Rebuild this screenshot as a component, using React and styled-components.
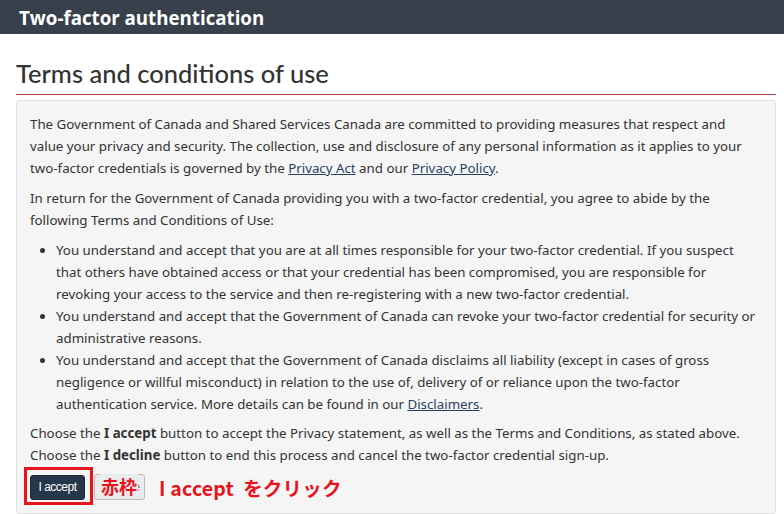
import React from "react";
import styled, { createGlobalStyle } from "styled-components";

const Global = createGlobalStyle`
  html, body { margin: 0; padding: 0; background: #fff; }
  body { font-family: "Noto Sans", sans-serif; color: #333; }
`;

const TopBar = styled.header`
  height: 34px;
  background: #38404c;
  display: flex;
  align-items: center;
  padding-left: 19px;
`;

const AppTitle = styled.div`
  font-family: "Open Sans", sans-serif;
  font-weight: 700;
  font-size: 18.7px;
  color: #fff;
  margin-top: 1px;
`;

const Main = styled.main`
  padding: 0 8px 0 16px;
`;

const Heading = styled.h1`
  font-family: Lato, sans-serif;
  font-weight: 500;
  font-size: 25.5px;
  line-height: 30px;
  color: #333;
  margin: 24px 0 0;
  padding-bottom: 6px;
  border-bottom: 1px solid #af3c43;
`;

const Panel = styled.section`
  margin-top: 5px;
  background: #f5f5f5;
  border: 1px solid #e0e0e0;
  border-radius: 3px;
  padding: 12px 13px 13px 13px;
  font-size: 13.3px;
  line-height: 22px;
`;

const Para = styled.p`
  margin: 0 0 8px;
`;

const Link = styled.a`
  color: #284162;
  text-decoration: underline;
`;

const List = styled.ul`
  margin: 0 0 7px;
  padding-left: 26px;
  li { margin: 0; }
`;

const ButtonRow = styled.div`
  display: flex;
  align-items: center;
  gap: 9px;
`;

const ButtonGroup = styled.div`
  position: relative;
  display: flex;
  align-items: center;
  gap: 9px;
`;

const Btn = styled.button`
  font-family: "Liberation Sans", Arial, sans-serif;
  font-size: 12px;
  letter-spacing: -0.5px;
  height: 25px;
  border-radius: 3px;
  padding: 0 4px;
  cursor: pointer;
  ${(p) =>
    p.$primary
      ? `background: #26374a; color: #fff; border: 1px solid #1c2838; width: 55px;`
      : `background: #eaebed; color: #888; border: 1px solid #bbb; width: 51px; height: 26px;`}
`;

const RedFrame = styled.div`
  position: absolute;
  box-sizing: border-box;
  left: -6px;
  top: -7px;
  width: 69px;
  height: 38px;
  border: 3.5px solid #e8141d;
  pointer-events: none;
`;

const FrameLabel = styled.span`
  position: absolute;
  left: 70px;
  top: 0px;
  font-family: "Noto Sans CJK JP", sans-serif;
  font-weight: 700;
  font-size: 18px;
  line-height: 25px;
  color: #e8141d;
  background: #eaebed;
  padding: 0 1px;
`;

const Note = styled.span`
  margin-left: 5px;
  font-family: "Noto Sans CJK JP", sans-serif;
  font-weight: 700;
  font-size: 19.5px;
  line-height: 25px;
  color: #e8141d;
  letter-spacing: 0.2px;
`;

export default function App() {
  return (
    <>
      <Global />
      <TopBar>
        <AppTitle>Two-factor authentication</AppTitle>
      </TopBar>
      <Main>
        <Heading>Terms and conditions of use</Heading>
        <Panel>
          <Para>
            The Government of Canada and Shared Services Canada are committed to providing measures that respect and
            value your privacy and security. The collection, use and disclosure of any personal information as it applies to your
            two-factor credentials is governed by the <Link href="#">Privacy Act</Link> and our{" "}
            <Link href="#">Privacy Policy</Link>.
          </Para>
          <Para>
            In return for the Government of Canada providing you with a two-factor credential, you agree to abide by the
            following Terms and Conditions of Use:
          </Para>
          <List>
            <li>
              You understand and accept that you are at all times responsible for your two-factor credential. If you suspect
              that others have obtained access or that your credential has been compromised, you are responsible for
              revoking your access to the service and then re-registering with a new two-factor credential.
            </li>
            <li>
              You understand and accept that the Government of Canada can revoke your two-factor credential for security or
              administrative reasons.
            </li>
            <li>
              You understand and accept that the Government of Canada disclaims all liability (except in cases of gross
              negligence or willful misconduct) in relation to the use of, delivery of or reliance upon the two-factor
              authentication service. More details can be found in our <Link href="#">Disclaimers</Link>.
            </li>
          </List>
          <Para>
            Choose the <b>I accept</b> button to accept the Privacy statement, as well as the Terms and Conditions, as stated above.
            <br />
            Choose the <b>I decline</b> button to end this process and cancel the two-factor credential sign-up.
          </Para>
          <ButtonRow>
            <ButtonGroup>
              <Btn $primary>I accept</Btn>
              <Btn>I decline</Btn>
              <RedFrame />
              <FrameLabel>赤枠</FrameLabel>
            </ButtonGroup>
            <Note>I accept&nbsp; をクリック</Note>
          </ButtonRow>
        </Panel>
      </Main>
    </>
  );
}
